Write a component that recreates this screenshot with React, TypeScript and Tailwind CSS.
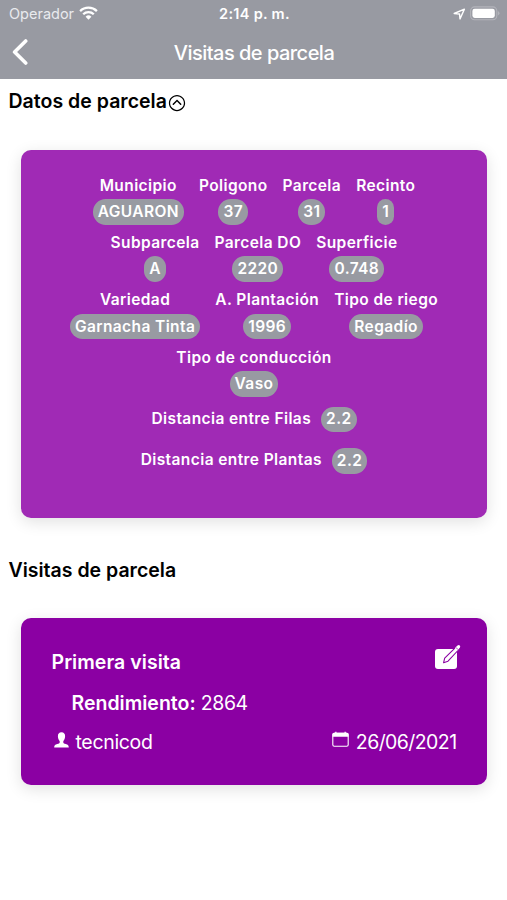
import React from 'react';
import { IoIosArrowDropup } from 'react-icons/io';

type Field = { label: string; value: string };

const rows: Field[][] = [
  [
    { label: 'Municipio', value: 'AGUARON' },
    { label: 'Poligono', value: '37' },
    { label: 'Parcela', value: '31' },
    { label: 'Recinto', value: '1' },
  ],
  [
    { label: 'Subparcela', value: 'A' },
    { label: 'Parcela DO', value: '2220' },
    { label: 'Superficie', value: '0.748' },
  ],
  [
    { label: 'Variedad', value: 'Garnacha Tinta' },
    { label: 'A. Plantación', value: '1996' },
    { label: 'Tipo de riego', value: 'Regadío' },
  ],
  [{ label: 'Tipo de conducción', value: 'Vaso' }],
];

const distances: Field[] = [
  { label: 'Distancia entre Filas', value: '2.2' },
  { label: 'Distancia entre Plantas', value: '2.2' },
];

function Pill({ children }: { children: React.ReactNode }) {
  return (
    <span className="flex h-[25.5px] items-center rounded-[12.75px] bg-[#989aa2] px-[5px]">{children}</span>
  );
}

function StatusBar() {
  return (
    <div className="grid h-7 grid-cols-3 items-center pr-[7px] pl-[9px] text-[14.5px]">
      <div className="flex items-center gap-[5px] text-[#e9eaee]">
        <span>Operador</span>
        <svg width="19" height="14" viewBox="0 0 19 14" className="-mt-[2px]" fill="none" stroke="white" strokeWidth="2.3">
          <path d="M1.1 5.1a12 12 0 0 1 16.8 0" />
          <path d="M4.2 8.3a7.6 7.6 0 0 1 10.6 0" />
          <path d="M9.5 13.7 6.6 10.7a4.2 4.2 0 0 1 5.8 0Z" fill="white" stroke="none" />
        </svg>
      </div>
      <div className="text-center font-semibold tracking-[0.3px] whitespace-nowrap">2:14 p. m.</div>
      <div className="flex items-center justify-end gap-[4px]">
        <svg width="13" height="12" viewBox="0 0 13 12" className="-mt-px" fill="none" stroke="white" strokeWidth="1.4" strokeLinejoin="round">
          <path d="M1.2 5.5 11.4 1.2 7 10.9 6.5 6Z" />
        </svg>
        <svg width="30" height="15" viewBox="0 0 30 15" className="-mt-[2px]">
          <rect x=".6" y=".9" width="26.2" height="12.8" rx="4" fill="none" stroke="#b3b4bb" strokeWidth="1.1" />
          <rect x="2.4" y="2.7" width="22.4" height="9.2" rx="2.3" fill="white" />
          <path d="M27.9 5v4.5q1.6-.7 1.6-2.25T27.9 5Z" fill="#b3b4bb" />
        </svg>
      </div>
    </div>
  );
}

export default function App() {
  return (
    <div className="h-[900px] w-[507px] overflow-hidden bg-white font-['Inter',sans-serif] text-white">
      <header className="h-[79px] bg-[#989aa2]">
        <StatusBar />
        <div className="grid h-12 grid-cols-[41px_1fr_40px] items-center">
          <svg className="ml-3" width="17" height="26" viewBox="0 0 17 26" fill="none" stroke="white" strokeWidth="3.6" strokeLinecap="round" strokeLinejoin="round">
            <path d="M13.7 2 2.6 13l11.1 11" />
          </svg>
          <h1 className="pt-px text-center text-[20px] font-medium tracking-[-0.52px]">Visitas de parcela</h1>
        </div>
      </header>

      <main>
        <h2 className="flex h-[46px] items-center pl-[8.5px] text-[19.5px] font-semibold tracking-[0.02px] text-black">
          Datos de parcela
          <IoIosArrowDropup className="mt-[2px]" size={20} />
        </h2>

        <section className="mx-[20.5px] mt-[25px] h-[367.5px] rounded-[10px] bg-[#a02ab5] pt-[22.5px] pl-px text-[15.5px] leading-[26px] font-semibold tracking-[0.4px] shadow-[0_4px_16px_rgba(0,0,0,0.12)]">
          {rows.map((row) => (
            <div key={row[0].label} className="flex h-[57.4px] justify-center gap-[15px]">
              {row.map((field) => (
                <div key={field.label} className="flex flex-col items-center gap-[0.5px]">
                  <span>{field.label}</span>
                  <Pill>{field.value}</Pill>
                </div>
              ))}
            </div>
          ))}
          <div className="pt-[4.5px]">
            {distances.map((field) => (
              <div key={field.label} className="flex h-[41.5px] justify-center gap-[10px]">
                <span className="-mt-px">{field.label}</span>
                <Pill>{field.value}</Pill>
              </div>
            ))}
          </div>
        </section>

        <h2 className="mt-[30px] flex h-[46px] items-center pl-[8.5px] text-[19.5px] font-semibold text-black">
          Visitas de parcela
        </h2>

        <section className="mx-[20.5px] mt-[24.5px] h-[167px] rounded-[10px] bg-[#8b00a3] pt-[25px] pr-[26px] pl-[31px] text-[19.5px] shadow-[0_4px_16px_rgba(0,0,0,0.12)]">
          <div className="flex h-10 items-center justify-between">
            <h3 className="font-semibold tracking-[0.05px]">Primera visita</h3>
            <svg className="-mt-3" width="27" height="27" viewBox="0 0 27 27">
              <rect x="1" y="5" width="22" height="20" rx="3" fill="white" />
              <path d="M9.6 18.7 10.7 14.2 23.2 1.9l2.6 2.6L14 17.2Z" fill="white" stroke="#8b00a3" strokeWidth="1.1" strokeLinejoin="round" />
              <path d="m20.9 4.1 2.6-2.5q1.3-1 2.3 0 .9 1 0 2.2L23.3 6.4Z" fill="white" />
              <path d="m21.8 3.3 2.5 2.5" stroke="#8b00a3" strokeWidth=".7" />
            </svg>
          </div>
          <p className="flex h-10 items-center gap-[5px] pt-px pl-5">
            <strong className="font-semibold">Rendimiento:</strong>
            <span className="font-normal tracking-[-0.35px]">2864</span>
          </p>
          <div className="flex h-10 items-center justify-between pr-[4px] font-normal">
            <div className="flex items-center gap-[7px]">
              <svg className="-mt-[6px] ml-[2px]" width="15" height="16" viewBox="0 0 15 16" fill="white">
                <path d="M7.5.3C5.1.3 3.8 2 3.9 4.2c.1 2.2.7 3.6 1.7 4.7.5 1.5 0 2.4-1.5 2.8C2 12.300.3 12.600.2 15.500h14.600c-.1-2.900-1.800-3.200-3.900-3.800-1.500-.4-2-1.300-1.500-2.800 1-1.100 1.600-2.500 1.700-4.700C11.200 2 9.900.3 7.500.3Z" />
              </svg>
              <span className="tracking-[-0.33px]">tecnicod</span>
            </div>
            <div className="flex items-center gap-[7px]">
              <svg className="-mt-[7px]" width="17" height="17" viewBox="0 0 17 17">
                <rect x=".8" y="2.3" width="15.4" height="13" rx="1.5" fill="none" stroke="white" strokeWidth="1.1" />
                <path d="M.5 5.8V3.3Q.5 1.8 2 1.8H15q1.5 0 1.5 1.5V5.8ZM3.2.8h1.3v2H3.2ZM12.5.8h1.3v2h-1.3Z" fill="white" />
              </svg>
              <span className="tracking-[-0.58px]">26/06/2021</span>
            </div>
          </div>
        </section>
      </main>
    </div>
  );
}
